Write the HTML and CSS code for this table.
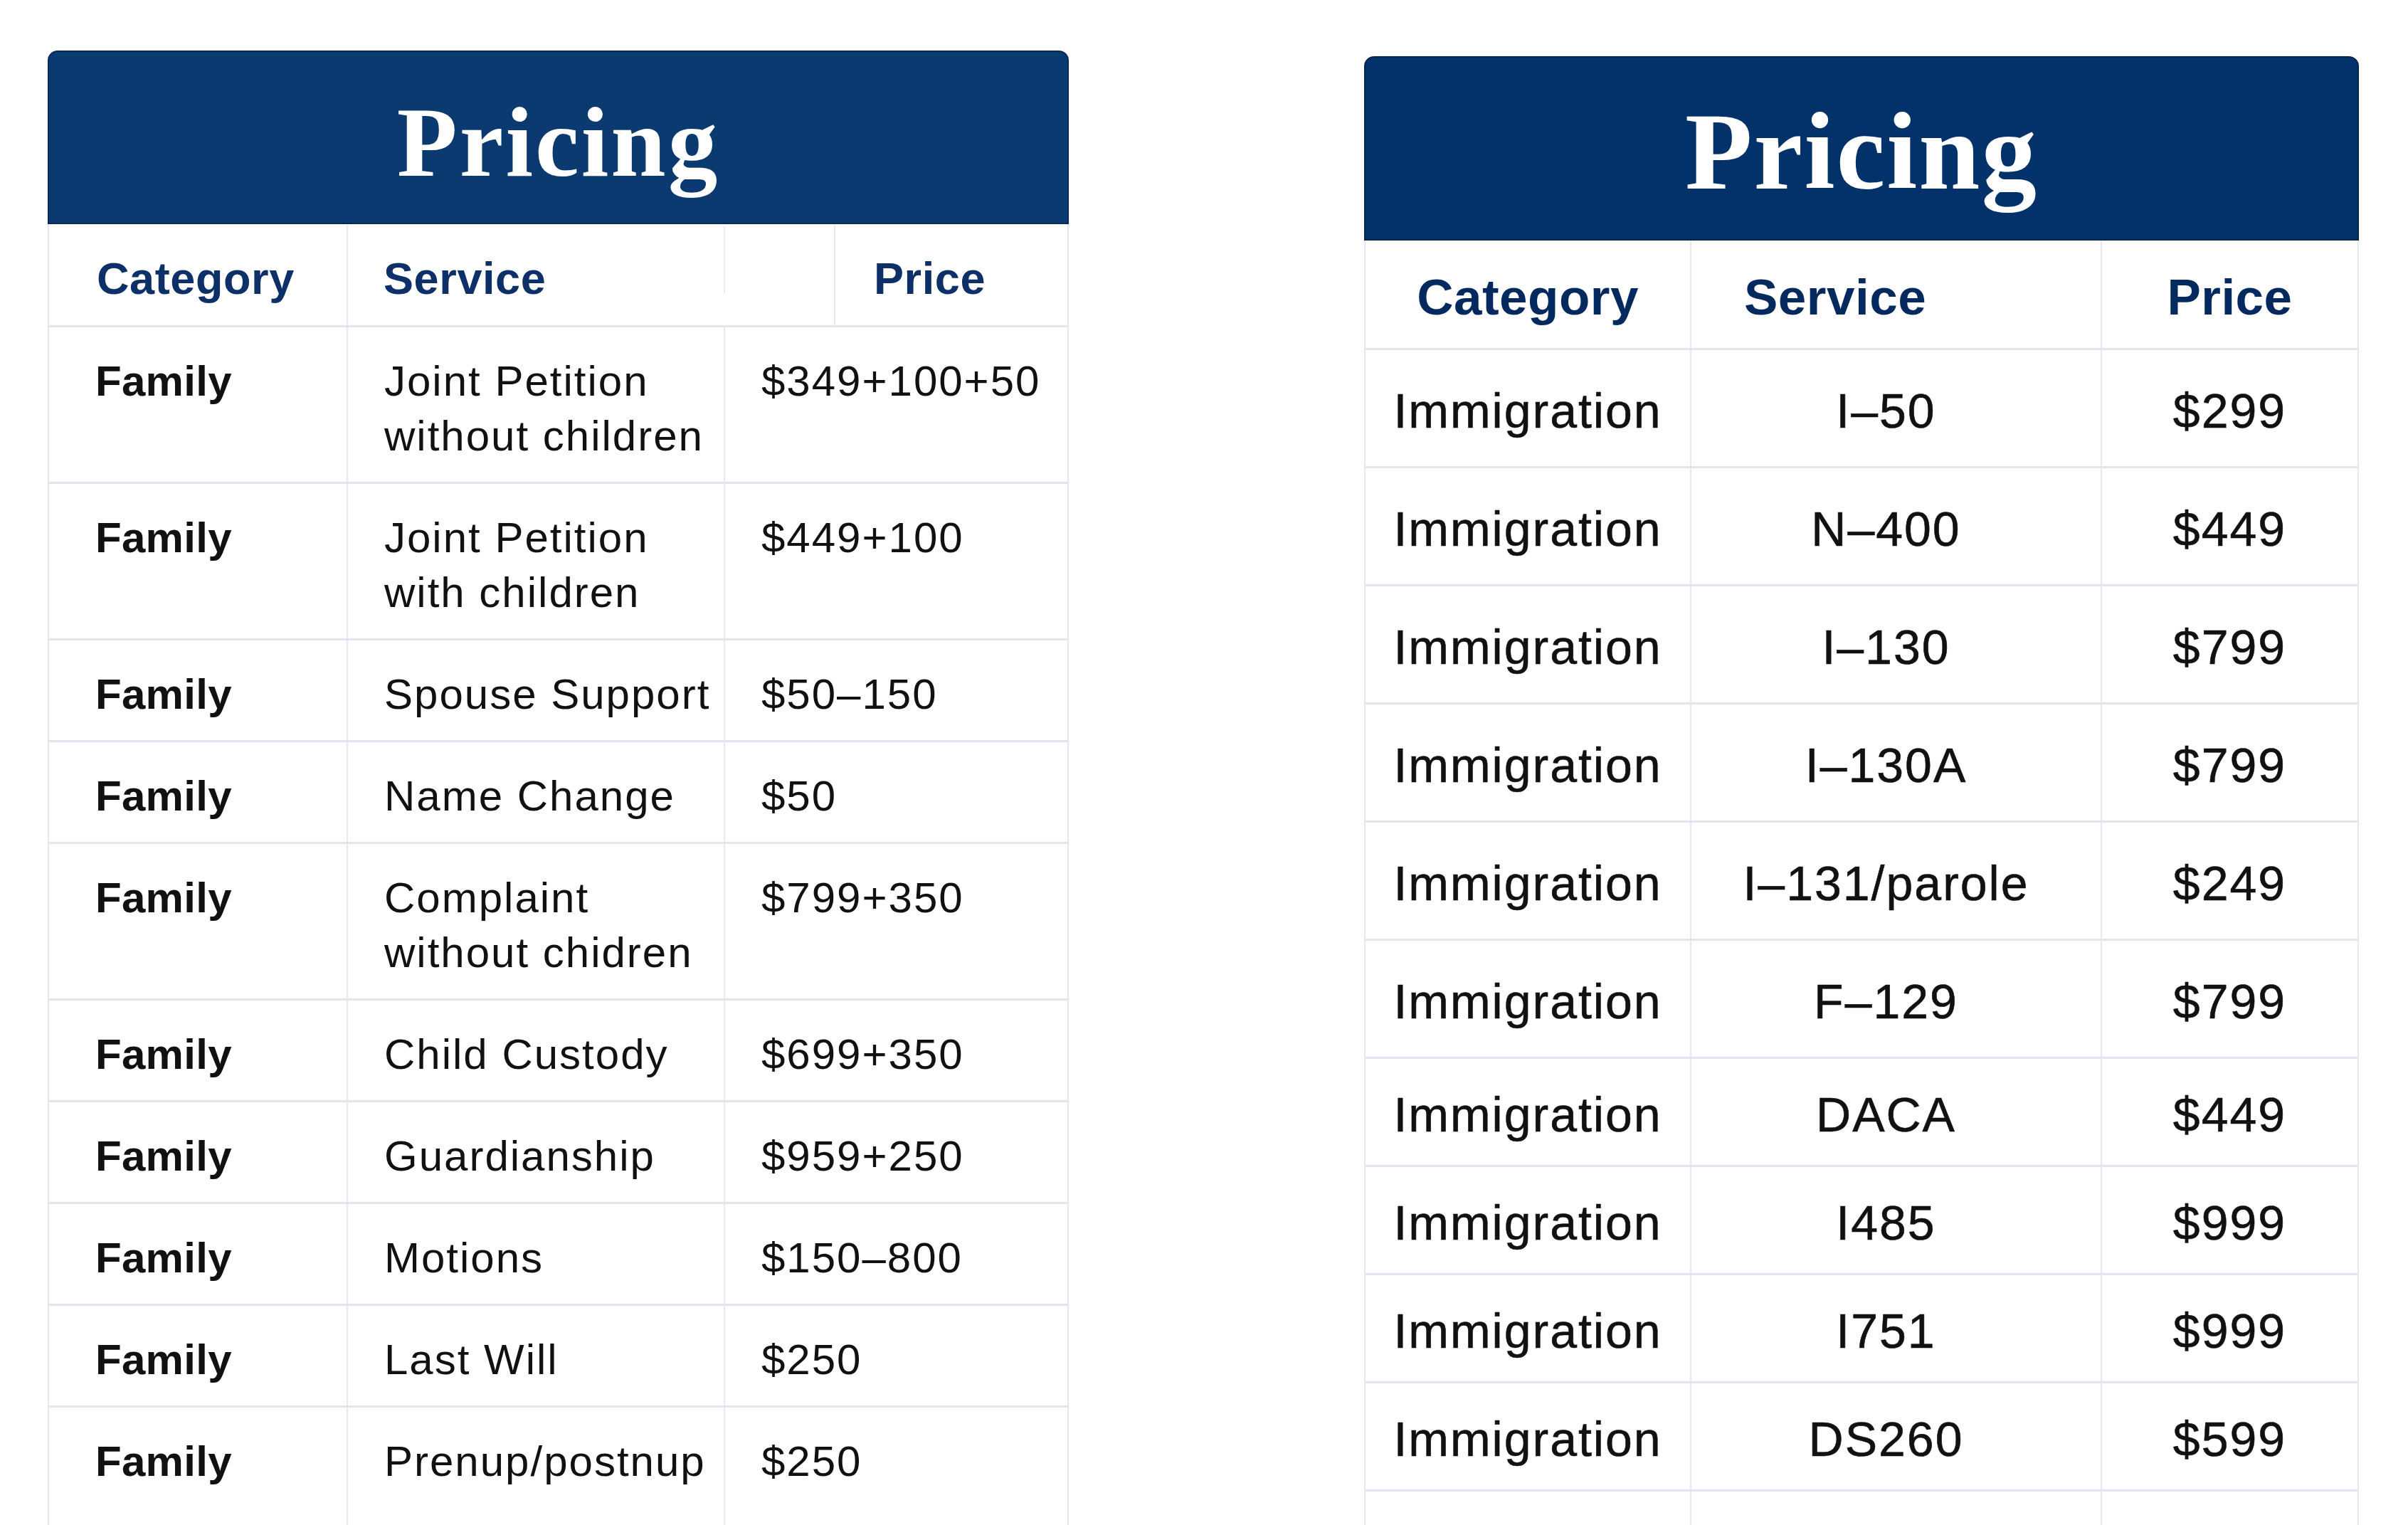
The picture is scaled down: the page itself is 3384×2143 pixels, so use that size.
FILE: index.html
```html
<!DOCTYPE html>
<html lang="en">
<head>
<meta charset="utf-8">
<title>Pricing</title>
<link rel="stylesheet" href="styles.css">
</head>
<body>
<main class="page">
  <section class="card card--family">
    <h1 class="card__title">Pricing</h1>
    <div class="table">
      <div class="row row--head">
        <div class="cell">Category</div>
        <div class="cell cell--service">Service</div>
        <div class="cell">Price</div>
      </div>
      <div class="row"><div class="cell cell--cat">Family</div><div class="cell">Joint Petition without children</div><div class="cell">$349+100+50</div></div>
      <div class="row"><div class="cell cell--cat">Family</div><div class="cell">Joint Petition with children</div><div class="cell">$449+100</div></div>
      <div class="row"><div class="cell cell--cat">Family</div><div class="cell">Spouse Support</div><div class="cell">$50–150</div></div>
      <div class="row"><div class="cell cell--cat">Family</div><div class="cell">Name Change</div><div class="cell">$50</div></div>
      <div class="row"><div class="cell cell--cat">Family</div><div class="cell">Complaint without chidren</div><div class="cell">$799+350</div></div>
      <div class="row"><div class="cell cell--cat">Family</div><div class="cell">Child Custody</div><div class="cell">$699+350</div></div>
      <div class="row"><div class="cell cell--cat">Family</div><div class="cell">Guardianship</div><div class="cell">$959+250</div></div>
      <div class="row"><div class="cell cell--cat">Family</div><div class="cell">Motions</div><div class="cell">$150–800</div></div>
      <div class="row"><div class="cell cell--cat">Family</div><div class="cell">Last Will</div><div class="cell">$250</div></div>
      <div class="row row--last"><div class="cell cell--cat">Family</div><div class="cell">Prenup/postnup</div><div class="cell">$250</div></div>
    </div>
  </section>

  <section class="card card--immigration">
    <h1 class="card__title">Pricing</h1>
    <div class="table">
      <div class="row row--head">
        <div class="cell">Category</div>
        <div class="cell cell--service">Service</div>
        <div class="cell">Price</div>
      </div>
      <div class="row"><div class="cell">Immigration</div><div class="cell cell--service">I–50</div><div class="cell">$299</div></div>
      <div class="row"><div class="cell">Immigration</div><div class="cell cell--service">N–400</div><div class="cell">$449</div></div>
      <div class="row"><div class="cell">Immigration</div><div class="cell cell--service">I–130</div><div class="cell">$799</div></div>
      <div class="row"><div class="cell">Immigration</div><div class="cell cell--service">I–130A</div><div class="cell">$799</div></div>
      <div class="row"><div class="cell">Immigration</div><div class="cell cell--service">I–131/parole</div><div class="cell">$249</div></div>
      <div class="row"><div class="cell">Immigration</div><div class="cell cell--service">F–129</div><div class="cell">$799</div></div>
      <div class="row row--tight"><div class="cell">Immigration</div><div class="cell cell--service">DACA</div><div class="cell">$449</div></div>
      <div class="row row--tight"><div class="cell">Immigration</div><div class="cell cell--service">I485</div><div class="cell">$999</div></div>
      <div class="row row--tight"><div class="cell">Immigration</div><div class="cell cell--service">I751</div><div class="cell">$999</div></div>
      <div class="row row--tight"><div class="cell">Immigration</div><div class="cell cell--service">DS260</div><div class="cell">$599</div></div>
      <div class="row row--tight"><div class="cell">Immigration</div><div class="cell cell--service">I–864</div><div class="cell">$499</div></div>
    </div>
  </section>
</main>
</body>
</html>
```
FILE: styles.css
```css
* { box-sizing: border-box; }

html, body {
  margin: 0;
  background: #ffffff;
}

body {
  font-family: "Liberation Sans", Arial, sans-serif;
  color: #111111;
  height: 2143px;
  overflow: hidden;
}

.page {
  display: flex;
  align-items: flex-start;
  gap: 415px;
  padding: 71px 0 0 67px;
}

.card { flex: none; }

.card--family { width: 1435px; }

.card--immigration {
  width: 1398px;
  margin-top: 8px;
}

/* ---------- title band ---------- */
.card__title {
  margin: 0;
  color: #ffffff;
  font-family: "Liberation Serif", "Times New Roman", serif;
  font-weight: 700;
  text-align: center;
  border-radius: 14px 14px 0 0;
  border: 2px solid;
}

.card--family .card__title {
  background: #0b3a70;
  border-color: #072b58;
  font-size: 139px;
  line-height: 139px;
  letter-spacing: 3px;
  padding: 58px 0 43px;
}

.card--immigration .card__title {
  background: #03326a;
  border-color: #01254f;
  font-size: 155px;
  line-height: 155px;
  letter-spacing: 2px;
  padding: 55px 0 45px;
}

/* ---------- table ---------- */
.table {
  border-left: 2px solid #e4e8ef;
  border-right: 2px solid #e4e8ef;
}

.row {
  display: grid;
  border-bottom: 3px solid #e1e6ee;
}

.cell {
  border-right: 2px solid #e6eaf0;
  position: relative;
}

.cell:last-child { border-right: 0; }

.row--head .cell {
  font-weight: 700;
}

/* family card */
.card--family .row {
  grid-template-columns: 420px 530px 1fr;
}

.card--family .row--head {
  grid-template-columns: 420px 685px 1fr;
}

.card--family .cell {
  font-size: 60px;
  line-height: 77px;
  letter-spacing: 2px;
  padding: 37px 10px 26px 51px;
}

.card--family .row--last .cell { padding-bottom: 120px; }

.card--family .cell:first-child { padding-left: 65px; }

.card--family .cell--cat {
  font-weight: 700;
  letter-spacing: 0.3px;
}

.card--family .row--head .cell {
  color: #0d3068;
  font-size: 63px;
  line-height: 76px;
  letter-spacing: 0.6px;
  padding: 38px 10px 28px 50px;
}

.card--family .row--head .cell:first-child { padding-left: 67px; }
.card--family .row--head .cell:last-child { padding-left: 54px; }

.card--family .row--head .cell--service::after {
  content: "";
  position: absolute;
  left: 528px;
  top: 3px;
  width: 2px;
  height: 94px;
  background: #e9edf2;
}

/* immigration card */
.card--immigration .row {
  grid-template-columns: 458px 577px 1fr;
}

.card--immigration .cell {
  font-size: 68px;
  line-height: 82px;
  letter-spacing: 2px;
  text-align: center;
  padding: 44px 0 37px;
  -webkit-text-stroke: 0.6px #111111;
}

.card--immigration .cell--service { padding-right: 28px; }

.card--immigration .row--tight .cell {
  padding-top: 37px;
  padding-bottom: 30px;
}

.card--immigration .row--head .cell {
  color: #04295f;
  font-size: 71px;
  line-height: 85px;
  letter-spacing: 0.5px;
  padding: 37px 0 29px;
  -webkit-text-stroke: 0;
}

.card--immigration .row--head .cell--service {
  text-align: left;
  padding-left: 74px;
}
```
